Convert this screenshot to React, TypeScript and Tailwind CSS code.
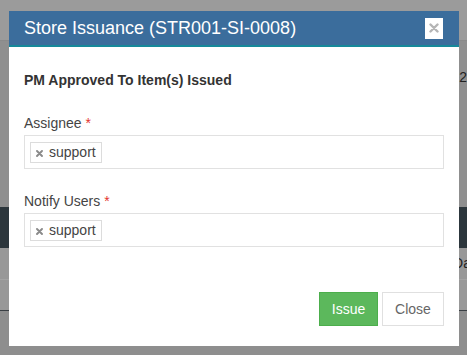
import React from "react";

function Tag() {
  return (
    <div className="flex h-[21px] items-center border border-[#dcdcdc] bg-white pl-[5px] pr-[5px]">
      <svg width="7" height="7" viewBox="0 0 7 7" className="mr-[6px] mt-[2px]">
        <path d="M1 1 L6 6 M6 1 L1 6" stroke="#8a8a8a" strokeWidth="1.9" strokeLinecap="round" />
      </svg>
      <span className="text-[14px] leading-none text-[#444]">support</span>
    </div>
  );
}

function Field({ label }: { label: string }) {
  return (
    <div className="flex flex-col">
      <div className="h-[22px] text-[14px] leading-[20px] text-[#444]">
        {label} <span className="text-[#e3342f]">*</span>
      </div>
      <div className="flex h-[34px] items-center border border-[#e1e1e1] px-[5px]">
        <Tag />
      </div>
    </div>
  );
}

export default function App() {
  return (
    <div
      className="relative h-[355px] w-[467px] overflow-hidden bg-[#8e8e8e]"
      style={{ fontFamily: '"Liberation Sans", Arial, sans-serif' }}
    >
      {/* background page */}
      <div className="flex h-full flex-col">
        <div className="h-[41px] border-b border-[#8a8a8a] bg-[#9b9b9b]" />
        <div className="flex h-[166px] items-start justify-end bg-[#8f8f8f] pt-[26px]">
          <span className="text-[14px] text-[#222]">-2</span>
        </div>
        <div className="h-[41px] bg-[#2c363c]" />
        <div className="flex h-[32px] items-center justify-end border-b border-[#a3a3a3] bg-[#989898]">
          <span className="-mr-[4px] text-[14px] text-[#222]">Da</span>
        </div>
        <div className="h-[31px] border-b border-[#3a3f44] bg-[#989898]" />
        <div className="flex-1 bg-[#8e8e8e]" />
      </div>

      {/* modal */}
      <div className="absolute left-[9px] top-[11px] flex h-[335px] w-[450px] flex-col bg-white">
        <div className="flex h-[36px] items-center justify-between border-b-2 border-[#16899a] bg-[#3b6d9c] pl-[15px] pr-[16px]">
          <span className="text-[18px] leading-none text-white">Store Issuance (STR001-SI-0008)</span>
          <div className="flex h-[21px] w-[18px] items-center justify-center bg-white">
            <svg width="10" height="10" viewBox="0 0 10 10">
              <path d="M1.5 1.5 L8.5 8.5 M8.5 1.5 L1.5 8.5" stroke="#b5b5b5" strokeWidth="2.4" strokeLinecap="round" />
            </svg>
          </div>
        </div>
        <div className="flex flex-1 flex-col px-[15px]">
          <div className="mt-[25px] text-[14px] font-bold leading-[16px] text-[#333]">PM Approved To Item(s) Issued</div>
          <div className="mt-[25px]">
            <Field label="Assignee" />
          </div>
          <div className="mt-[22px]">
            <Field label="Notify Users" />
          </div>
          <div className="mt-[45px] flex justify-end gap-[4px]">
            <button className="h-[34px] w-[59px] border border-[#4cae4c] bg-[#5cb85c] text-[14px] text-white">Issue</button>
            <button className="h-[34px] w-[62px] border border-[#e0e0e0] bg-white text-[14px] text-[#666]">Close</button>
          </div>
        </div>
      </div>
    </div>
  );
}
